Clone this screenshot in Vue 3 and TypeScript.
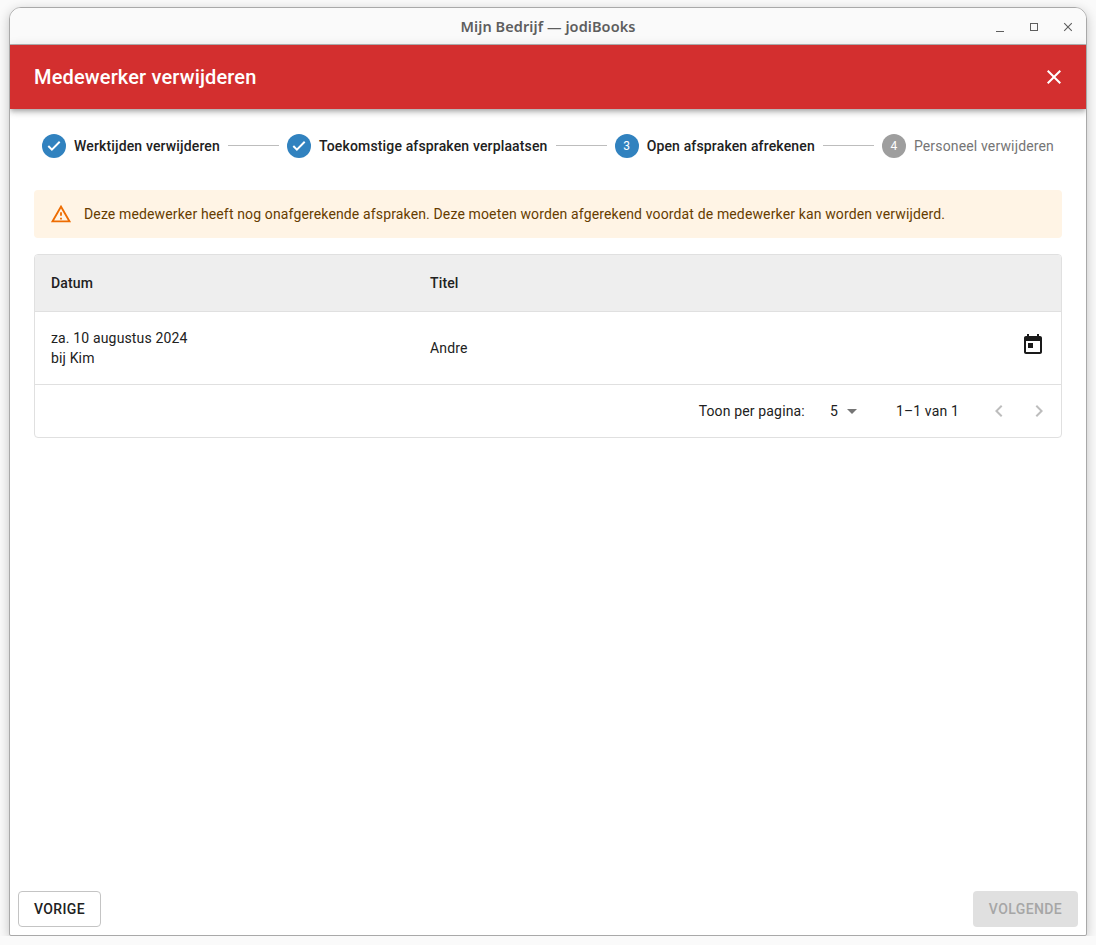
<script setup lang="ts">
interface Step { label: string; state: 'done' | 'active' | 'todo'; n: number }
const steps: Step[] = [
  { label: 'Werktijden verwijderen', state: 'done', n: 1 },
  { label: 'Toekomstige afspraken verplaatsen', state: 'done', n: 2 },
  { label: 'Open afspraken afrekenen', state: 'active', n: 3 },
  { label: 'Personeel verwijderen', state: 'todo', n: 4 },
]
</script>

<template>
  <div class="window">
    <div class="titlebar">
      <span class="wintitle">Mijn Bedrijf — jodiBooks</span>
      <div class="winctl">
        <svg width="12" height="12" viewBox="0 0 12 12"><path d="M2 10.5h8" stroke="#5e5e5e" stroke-width="1" fill="none" /></svg>
        <svg width="12" height="12" viewBox="0 0 12 12"><rect x="2.5" y="2.5" width="7" height="7" stroke="#5e5e5e" stroke-width="1" fill="none" /></svg>
        <svg width="12" height="12" viewBox="0 0 12 12"><path d="M2.2 2.2l7.6 7.6M9.8 2.2l-7.6 7.6" stroke="#5e5e5e" stroke-width="1.1" fill="none" /></svg>
      </div>
    </div>
    <header class="appbar">
      <h1>Medewerker verwijderen</h1>
      <svg class="close" width="24" height="24" viewBox="0 0 24 24"><path fill="#fff" d="M19 6.41 17.59 5 12 10.59 6.41 5 5 6.41 10.59 12 5 17.59 6.41 19 12 13.41 17.59 19 19 17.59 13.41 12z" /></svg>
    </header>
    <main class="content">
      <div class="stepper">
        <template v-for="(s, i) in steps" :key="s.n">
          <div v-if="i > 0" class="connector"></div>
          <div class="step" :class="s.state">
            <svg v-if="s.state === 'done'" width="24" height="24" viewBox="0 0 24 24"><circle cx="12" cy="12" r="12" fill="#3182bf" /><path fill="#fff" d="M9.9 17 5.6 12.7l1.4-1.4 2.9 2.9L17 7.1l1.4 1.4z" /></svg>
            <span v-else class="num">{{ s.n }}</span>
            <span class="label">{{ s.label }}</span>
          </div>
        </template>
      </div>

      <div class="alert">
        <svg width="22" height="22" viewBox="0 0 24 24"><path fill="#ed6c02" d="M12 5.99 19.53 19H4.47L12 5.99M12 2 1 21h22L12 2zm1 14h-2v2h2v-2zm0-6h-2v4h2v-4z" /></svg>
        <span>Deze medewerker heeft nog onafgerekende afspraken. Deze moeten worden afgerekend voordat de medewerker kan worden verwijderd.</span>
      </div>

      <div class="table">
        <div class="row head">
          <div class="c1">Datum</div>
          <div class="c2">Titel</div>
        </div>
        <div class="row body">
          <div class="c1">za. 10 augustus 2024<br />bij Kim</div>
          <div class="c2">Andre</div>
          <svg class="cal" width="24" height="24" viewBox="0 0 24 24"><path fill="#1a1a1a" d="M19 3h-1V1h-2v2H8V1H6v2H5c-1.11 0-2 .9-2 2v14c0 1.1.89 2 2 2h14c1.1 0 2-.9 2-2V5c0-1.1-.9-2-2-2zm0 16H5V8h14v11zM7 10h5v5H7z" /></svg>
        </div>
        <div class="pager">
          <span>Toon per pagina:</span>
          <span class="select">5<svg width="24" height="24" viewBox="0 0 24 24"><path fill="#757575" d="M7 10l5 5 5-5z" /></svg></span>
          <span class="range">1–1 van 1</span>
          <svg class="nav first" width="24" height="24" viewBox="0 0 24 24"><path fill="#bdbdbd" d="M15.41 7.41 14 6l-6 6 6 6 1.41-1.41L10.83 12z" /></svg>
          <svg class="nav" width="24" height="24" viewBox="0 0 24 24"><path fill="#bdbdbd" d="M10 6 8.59 7.41 13.17 12l-4.58 4.59L10 18l6-6z" /></svg>
        </div>
      </div>
    </main>
    <footer class="actions">
      <button class="btn prev" type="button">VORIGE</button>
      <button class="btn next" type="button" disabled>VOLGENDE</button>
    </footer>
  </div>
</template>

<style>
html, body { background: #fafafa; }
</style>

<style scoped>
.window {
  box-sizing: border-box;
  width: 1078px;
  height: 929px;
  margin: 7px 0 0 9px;
  display: flex;
  flex-direction: column;
  background: #fff;
  border: 1px solid #a9a9a9;
  border-top-left-radius: 12px;
  border-top-right-radius: 12px;
  border-bottom-left-radius: 2px;
  border-bottom-right-radius: 2px;
  box-shadow: 0 3px 12px rgba(0, 0, 0, 0.22);
  overflow: hidden;
  font-family: Roboto, sans-serif;
  font-size: 14px;
  letter-spacing: 0.15px;
  color: #212121;
}
.titlebar {
  flex: 0 0 36px;
  position: relative;
  display: flex;
  align-items: center;
  justify-content: center;
  background: #fafafa;
  border-bottom: 1px solid #b5b5b5;
}
.wintitle {
  font-family: "Noto Sans", sans-serif;
  font-weight: 600;
  font-size: 14.5px;
  letter-spacing: 0.08px;
  color: #5e5e5e;
}
.winctl {
  position: absolute;
  right: 12px;
  top: 13px;
  display: flex;
  gap: 22px;
}
.appbar {
  flex: 0 0 64px;
  display: flex;
  align-items: center;
  justify-content: space-between;
  padding: 0 20px 0 24px;
  background: #d32f2f;
  color: #fff;
  box-shadow: 0 2px 4px -1px rgba(0, 0, 0, 0.2), 0 4px 5px 0 rgba(0, 0, 0, 0.14), 0 1px 10px 0 rgba(0, 0, 0, 0.12);
  z-index: 1;
}
.appbar h1 {
  margin: 0;
  font-size: 20px;
  font-weight: 500;
  letter-spacing: 0.15px;
}
.content {
  flex: 1;
  padding: 25px 24px 0;
  display: flex;
  flex-direction: column;
}
.stepper {
  display: flex;
  align-items: center;
  height: 24px;
  margin-bottom: 32px;
}
.connector {
  flex: 1;
  height: 1px;
  margin-bottom: 1px;
  background: #bdbdbd;
}
.step {
  display: flex;
  align-items: center;
  gap: 8px;
  padding: 0 8px;
  font-weight: 500;
}
.step svg { display: block; }
.num {
  width: 24px;
  height: 24px;
  border-radius: 50%;
  display: flex;
  align-items: center;
  justify-content: center;
  font-size: 12px;
  font-weight: 400;
  color: #fff;
  background: #3182bf;
}
.todo .num { background: #9e9e9e; }
.todo .label { font-weight: 400; color: #757575; }
.alert {
  height: 48px;
  box-sizing: border-box;
  display: flex;
  align-items: center;
  gap: 12px;
  padding: 0 16px;
  background: #fff4e5;
  border-radius: 4px;
  color: #663c00;
  letter-spacing: 0.14px;
  margin-bottom: 16px;
}
.alert svg { flex: none; }
.table {
  border: 1px solid #e0e0e0;
  border-radius: 4px;
  overflow: hidden;
}
.row {
  position: relative;
  display: grid;
  grid-template-columns: 379px 1fr;
  align-items: center;
  padding-left: 16px;
  border-bottom: 1px solid #e0e0e0;
}
.head {
  height: 56px;
  box-sizing: border-box;
  background: #eeeeee;
  font-weight: 500;
  border-bottom: 0;
}
.body {
  height: 74px;
  box-sizing: border-box;
  line-height: 20px;
  border-top: 1px solid #e0e0e0;
}
.cal {
  position: absolute;
  right: 16px;
  top: 21px;
}
.pager {
  height: 52px;
  display: flex;
  align-items: center;
  padding-right: 10px;
  justify-content: flex-end;
}
.select {
  display: flex;
  align-items: center;
  margin-left: 25px;
  width: 32px;
  margin-right: 34px;
  position: relative;
}
.select svg {
  position: absolute;
  left: 10px;
}
.range { margin-right: 28px; white-space: nowrap; }
.nav { display: block; }
.nav.first { margin-right: 16px; }
.actions {
  flex: 0 0 auto;
  display: flex;
  justify-content: space-between;
  padding: 0 8px 8px;
}
.btn {
  height: 36px;
  border-radius: 4px;
  font-family: Roboto, sans-serif;
  font-size: 14px;
  font-weight: 500;
  letter-spacing: 0.4px;
  box-sizing: border-box;
}
.prev {
  width: 83px;
  background: #fff;
  border: 1px solid #c4c4c4;
  color: #212121;
}
.next {
  width: 105px;
  background: #e0e0e0;
  border: 0;
  color: #a6a6a6;
}
</style>
